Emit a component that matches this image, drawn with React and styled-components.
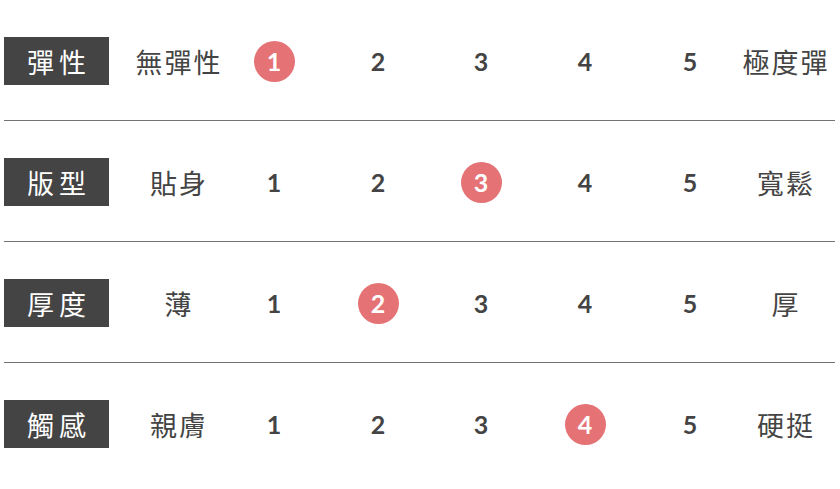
import React from 'react';
import styled, { createGlobalStyle } from 'styled-components';

const GlobalStyle = createGlobalStyle`
  body {
    margin: 0;
    background: #fff;
    font-family: "Noto Sans CJK TC", "Noto Sans", sans-serif;
  }
`;

const Table = styled.div`
  width: 831px;
  padding-left: 4px;
`;

const Row = styled.div`
  display: grid;
  grid-template-columns: 126px 96px 96px 112px 94px 114px 96px 94px;
  align-items: center;
  padding: 37px 0 35px;
  border-bottom: ${props => (props.$last ? 'none' : '1px solid #737373')};
`;

const Label = styled.div`
  width: 105px;
  height: 48px;
  background: #444;
  color: #fff;
  display: flex;
  align-items: center;
  justify-content: center;
  font-size: 27px;
  letter-spacing: 5px;
  padding-left: 5px;
  box-sizing: border-box;
`;

const Word = styled.div`
  text-align: center;
  color: #444;
  font-size: 27px;
  letter-spacing: 2px;
  padding-left: 2px;
`;

const Cell = styled.div`
  display: flex;
  justify-content: center;
`;

const Num = styled.span`
  width: 41px;
  height: 41px;
  border-radius: 50%;
  display: flex;
  align-items: center;
  justify-content: center;
  font-family: Lato, "Liberation Sans", sans-serif;
  font-weight: 700;
  font-size: 25px;
  color: ${props => (props.$active ? '#fff' : '#444')};
  background: ${props => (props.$active ? '#e57274' : 'transparent')};
`;

const rows = [
  { label: '彈性', low: '無彈性', high: '極度彈', value: 1 },
  { label: '版型', low: '貼身', high: '寬鬆', value: 3 },
  { label: '厚度', low: '薄', high: '厚', value: 2 },
  { label: '觸感', low: '親膚', high: '硬挺', value: 4 },
];

const App = () => (
  <>
    <GlobalStyle />
    <Table>
      {rows.map((r, i) => (
        <Row key={r.label} $last={i === rows.length - 1}>
          <Label>{r.label}</Label>
          <Word>{r.low}</Word>
          {[1, 2, 3, 4, 5].map(n => (
            <Cell key={n}>
              <Num $active={n === r.value}>{n}</Num>
            </Cell>
          ))}
          <Word>{r.high}</Word>
        </Row>
      ))}
    </Table>
  </>
);

export default App;
